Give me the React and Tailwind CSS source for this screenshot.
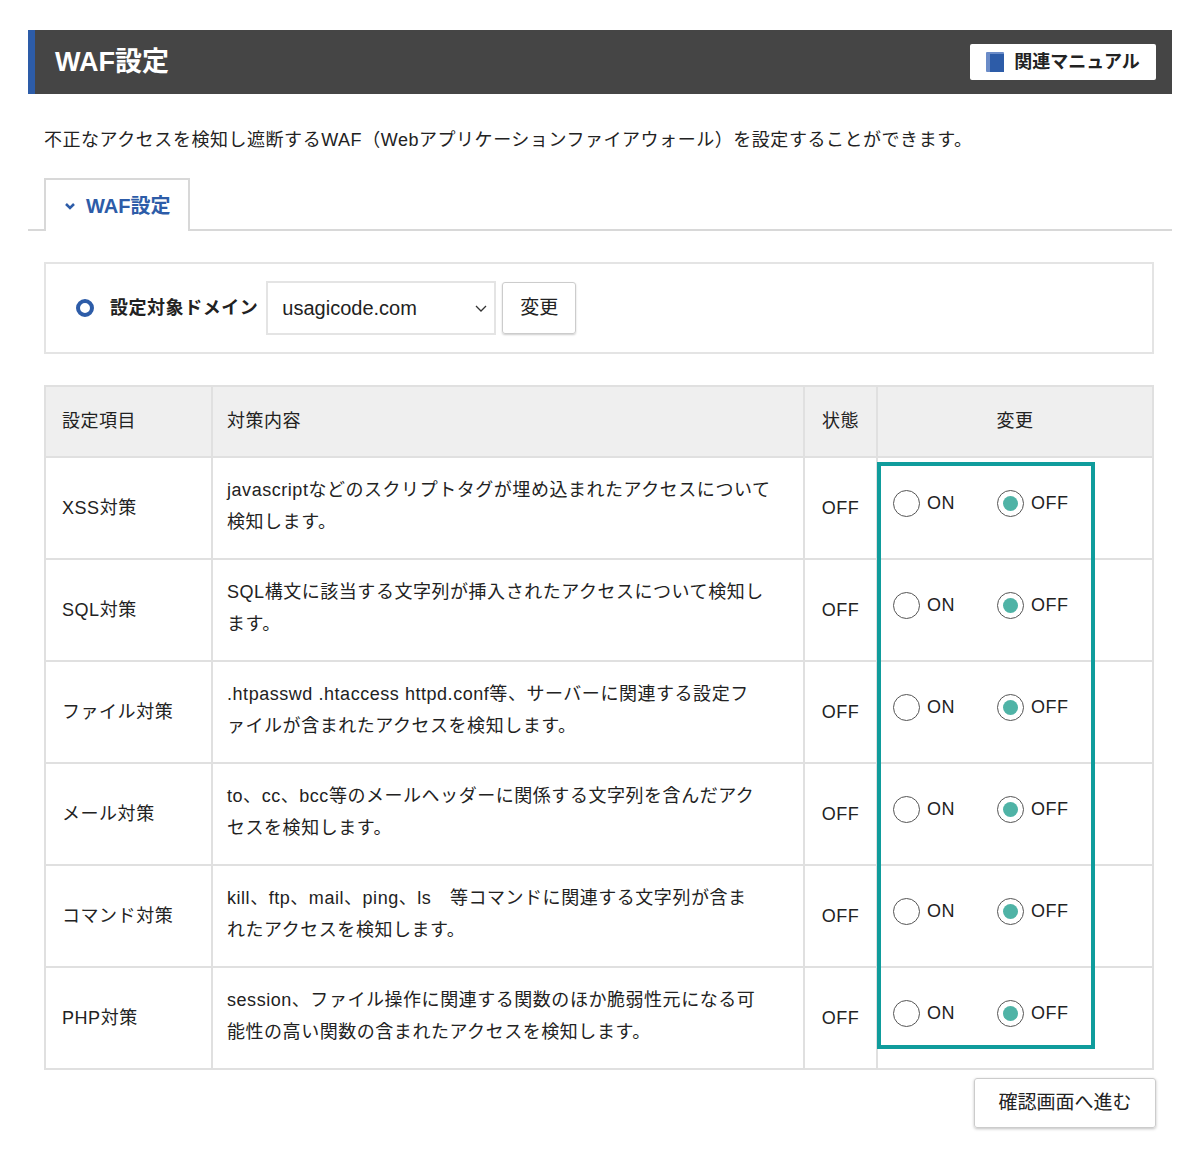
const rows = [
  ["XSS対策", "javascriptなどのスクリプトタグが埋め込まれたアクセスについて", "検知します。"],
  ["SQL対策", "SQL構文に該当する文字列が挿入されたアクセスについて検知し", "ます。"],
  ["ファイル対策", ".htpasswd .htaccess httpd.conf等、サーバーに関連する設定フ", "ァイルが含まれたアクセスを検知します。"],
  ["メール対策", "to、cc、bcc等のメールヘッダーに関係する文字列を含んだアク", "セスを検知します。"],
  ["コマンド対策", "kill、ftp、mail、ping、ls　等コマンドに関連する文字列が含ま", "れたアクセスを検知します。"],
  ["PHP対策", "session、ファイル操作に関連する関数のほか脆弱性元になる可", "能性の高い関数の含まれたアクセスを検知します。"],
];

export default function App() {
  const f = { fontFamily: '"Liberation Sans","Noto Sans CJK JP",sans-serif' };
  return (
    <div style={f} className="bg-white w-[1200px] h-[1159px] pt-[30px] px-[28px] text-[#222]">
      <div className="h-[64px] bg-[#454545] border-l-[7px] border-[#2d5ca8] flex items-center justify-between pl-[20px] pr-[16px]">
        <div className="text-white text-[27px] font-bold">WAF設定</div>
        <div className="bg-white rounded-[2px] h-[36px] w-[186px] flex items-center justify-center gap-[10px] text-[18px] font-bold text-[#222]">
          <svg width="18" height="20" viewBox="0 0 18 20"><rect x="0" y="0" width="18" height="20" rx="1" fill="#6b8cc8"/><rect x="4" y="2" width="14" height="18" fill="#2d5ca8"/></svg>
          関連マニュアル
        </div>
      </div>
      <div className="pl-[16px] pt-[33px] text-[18px] tracking-[0.03em]">不正なアクセスを検知し遮断するWAF（Webアプリケーションファイアウォール）を設定することができます。</div>
      <div className="mt-[24px] border-b-2 border-[#d8d8d8] flex pl-[16px]">
        <div className="w-[146px] h-[53px] border-2 border-b-0 border-[#d8d8d8] -mb-[2px] bg-white flex items-center gap-[10px] pl-[18px] text-[#2d5ca8] font-bold text-[20px]">
          <svg width="12" height="8" viewBox="0 0 12 8"><path d="M2 2l4 4 4-4" stroke="#2d5ca8" strokeWidth="2.5" fill="none"/></svg>
          WAF設定
        </div>
      </div>
      <div className="mt-[31px] ml-[16px] w-[1110px] h-[92px] border-2 border-[#e4e4e4] flex items-center pl-[30px]">
        <span className="w-[18px] h-[18px] rounded-full border-[4px] border-[#2d5ca8] mr-[16px]"></span>
        <span className="font-bold text-[18px] tracking-[0.03em] mr-[8px]">設定対象ドメイン</span>
        <div className="w-[230px] h-[54px] border-2 border-[#e4e4e4] flex items-center justify-between pl-[14px] pr-[6px] text-[20px]">
          usagicode.com
          <svg width="14" height="10" viewBox="0 0 14 10"><path d="M2 3l5 5 5-5" stroke="#333" strokeWidth="1.3" fill="none"/></svg>
        </div>
        <div className="ml-[6px] w-[74px] h-[52px] border border-[#ccc] rounded-[3px] shadow-[0_1px_2px_rgba(0,0,0,0.2)] flex items-center justify-center text-[19px]">変更</div>
      </div>
      <div className="relative mt-[31px] ml-[16px] w-[1110px]">
        <table className="w-full border-collapse text-[18px] tracking-[0.03em] border-2 border-[#e0e0e0]">
          <thead>
            <tr className="bg-[#efefef] h-[71px]">
              <th className="w-[167px] border-2 border-[#e0e0e0] text-left font-normal pl-[16px]">設定項目</th>
              <th className="w-[592px] border-2 border-[#e0e0e0] text-left font-normal pl-[14px]">対策内容</th>
              <th className="w-[73px] border-2 border-[#e0e0e0] text-center font-normal">状態</th>
              <th className="border-2 border-[#e0e0e0] text-center font-normal">変更</th>
            </tr>
          </thead>
          <tbody>
            {rows.map((r) => (
              <tr key={r[0]} className="h-[102px]">
                <td className="border-2 border-[#e0e0e0] pl-[16px]">{r[0]}</td>
                <td className="border-2 border-[#e0e0e0] pl-[14px] leading-[32px] pb-[4px]">{r[1]}<br />{r[2]}</td>
                <td className="border-2 border-[#e0e0e0] text-center">OFF</td>
                <td className="border-2 border-[#e0e0e0] pl-[15px] pb-[10px]">
                  <div className="flex items-center">
                    <span className="w-[27px] h-[27px] rounded-full border-[1.5px] border-[#555] mr-[7px]"></span>
                    <span className="w-[70px]">ON</span>
                    <span className="w-[27px] h-[27px] rounded-full border-[1.5px] border-[#555] mr-[7px] flex items-center justify-center"><span className="w-[15px] h-[15px] rounded-full bg-[#4fb3a6]"></span></span>
                    <span>OFF</span>
                  </div>
                </td>
              </tr>
            ))}
          </tbody>
        </table>
        <div className="absolute left-[833px] top-[77px] w-[218px] h-[587px] border-[4px] border-[#0f9c9c] pointer-events-none"></div>
      </div>
      <div className="flex justify-end pr-[16px] mt-[8px]">
        <div className="w-[182px] h-[50px] border border-[#ccc] rounded-[3px] shadow-[0_1px_3px_rgba(0,0,0,0.25)] flex items-center justify-center text-[19px]">確認画面へ進む</div>
      </div>
    </div>
  );
}
